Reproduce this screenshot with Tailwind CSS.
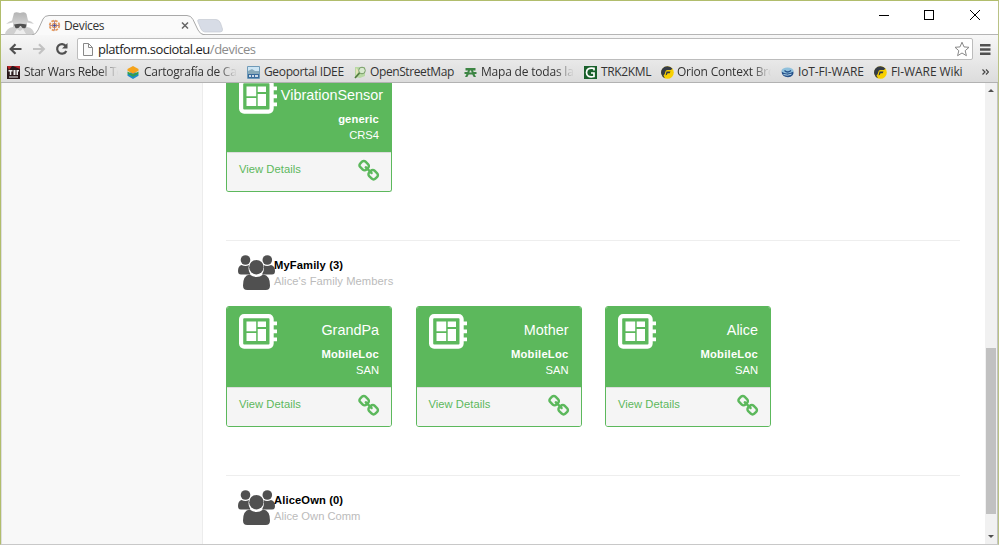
<!DOCTYPE html>
<html lang="en">
<head>
<meta charset="utf-8">
<title>Devices</title>
<script src="https://cdn.jsdelivr.net/npm/@tailwindcss/browser@4"></script>
</head>
<body class="w-[999px] h-[545px] overflow-hidden bg-white">
<svg class="hidden">
  <symbol id="link" viewBox="0 0 1792 1792"><path d="M1456 1216q0-40-28-68l-208-208q-28-28-68-28-42 0-72 32 3 3 19 18.500t21.500 21.500 15 19 13 25.500 3.500 27.500q0 40-28 68t-68 28q-15 0-27.500-3.500t-25.500-13-19-15-21.500-21.500-18.500-19q-33 31-33 73 0 40 28 68l206 207q27 27 68 27 40 0 68-26l147-146q28-28 28-67zm-703-705q0-40-28-68l-206-207q-28-28-68-28-39 0-68 27l-147 146q-28 28-28 67 0 40 28 68l208 208q27 27 68 27 42 0 72-31-3-3-19-18.500t-21.500-21.500-15-19-13-25.500-3.500-27.500q0-40 28-68t68-28q15 0 27.500 3.500t25.500 13 19 15 21.500 21.500 18.500 19q33-31 33-73zm895 705q0 120-85 203l-147 146q-83 83-203 83-121 0-204-85l-206-207q-83-83-83-203 0-123 88-209l-88-88q-86 88-208 88-120 0-204-84l-208-208q-84-84-84-204t85-203l147-146q83-83 203-83 121 0 204 85l206 207q83 83 83 203 0 123-88 209l88 88q86-88 208-88 120 0 204 84l208 208q84 84 84 204z" fill="#5cb85c"/></symbol>
  <symbol id="chip" viewBox="0 0 38 35"><rect x="2.100" y="2.100" width="30.500" height="30.500" rx="3" fill="none" stroke="#fff" stroke-width="4.200"/><path d="M7.500 7.500h9.700v9.700h-9.700zM18.700 7.500h8.300v5.500h-8.300zM7.500 19h9.700v8h-9.700zM18.700 15h8.300v12h-8.300zM33 7.500h5v3.800h-5zM33 15.500h5v3.800h-5zM33 23.500h5v3.800h-5z" fill="#fff"/></symbol>
  <symbol id="group" viewBox="0 0 37 35"><g fill="#505050"><circle cx="7.500" cy="5" r="4.800"/><circle cx="29.300" cy="5" r="4.800"/><path d="M3.500 10q4 2 7.500 0q-1.500 5 1.500 9.500H3q-3 0-3-3.500q0-5 3.500-6zM33 10q-4 2-7.500 0q1.500 5-1.500 9.500h10q3 0 3-3.500q0-5-4-6z"/><circle cx="18.400" cy="12.200" r="7.200"/><path d="M11.500 19.500q7 5 13.800 0q6.700 1 6.700 11q0 4.500-4.200 4.500H9.200Q5 35 5 30.500q0-10 6.500-11z"/></g></symbol>
  <symbol id="fiware" viewBox="0 0 13 13"><circle cx="6.500" cy="6.500" r="6.300" fill="#f8d000"/><path d="M4 12.300A6.300 6.300 0 1 1 11.500 2.800L9.800 4H6.500Q4.500 4 4.300 6T2.500 9.500zM5.500 5.500h4l-.8 1.700H6.500Q6.300 9 4.500 9.500z" fill="#343b45"/></symbol>
</svg>
<div class="w-[999px] h-[545px] flex flex-col border-t border-l border-[#b1bd6c] border-r border-r-[#b9c285] border-b border-b-[#c8c8c8] font-['Open_Sans','Noto_Sans',sans-serif] text-[#333]">

  <!-- tab strip -->
  <header class="h-[34px] shrink-0 flex relative border-b border-[#b5b5b5]">
    <svg class="w-[226px] h-[34px]" viewBox="1 1 226 34">
      <defs><linearGradient id="hat" x2="0" y2="1"><stop stop-color="#b4b4b4"/><stop offset="1" stop-color="#d2d2d2"/></linearGradient></defs>
      <path d="M5 34.500Q6 28 13 27V21H27V27Q34 28 34 34.500z" fill="#d0d0d0"/>
      <path d="M6 24Q9 21 12 20.500L14 13Q16 11.500 20 13Q25 11 26.500 14L28 20.500Q32 21 34 24Q20 20 6 24z" fill="url(#hat)"/>
      <path d="M14 24.500Q20 23 26.500 24.500L25.500 28Q22 29 21 26h-1Q19 29 15.500 28z" fill="#505050"/>
      <path d="M14 34l3-5 3 2 3-2 3 5z" fill="#eee"/>
      <path d="M32 35Q36 34.500 38 30L43 19Q44.500 15.500 49 15.500H187Q191 15.500 193 19.500L198 30Q200 34.500 205 35" fill="#fafafa" stroke="#a9a9a9"/>
      <path d="M199 19.500H216Q219 19.500 220.500 23L222.500 29Q223 32 220 32H205Q202.500 32 201 29L198 22Q197 19.500 199 19.500z" fill="#d7dce6" stroke="#c5cad3" stroke-width=".7"/>
      <g fill="none" stroke="#e59a5c" stroke-width="1.200"><circle cx="54.500" cy="25.500" r="2.200"/><circle cx="54.500" cy="25.500" r="4.800" stroke-dasharray="2.600 1.170" stroke-width="1.800"/><path d="M49.500 25.500h10M54.500 20.500v10" stroke="#986c89" stroke-width=".8"/></g><circle cx="54.500" cy="25.500" r="1.200" fill="#445399"/>
      <path d="M182 22.500l6 6M188 22.500l-6 6" stroke="#666" stroke-width="1.500"/>
    </svg>
    <span class="absolute left-[63px] top-[16px] leading-[17px] text-[12px] tracking-[-0.35px]">Devices</span>
    <svg class="ml-auto mr-[15px] mt-[8px] w-[104px] h-[12px]" viewBox="0 0 104 12" fill="none" stroke="#000" shape-rendering="crispEdges"><path d="M0 6.500h10"/><path d="M45.500 1.500h9v9h-9z"/><path d="M91 1l10 10M101 1l-10 10" shape-rendering="auto"/></svg>
  </header>

  <!-- toolbar and bookmarks -->
  <div class="h-[48px] shrink-0 flex flex-col bg-linear-to-b from-[#f7f7f7] to-[#dcdcdc] border-b border-[#b2b2b2]">
    <div class="h-[27px] flex items-center pt-px">
      <svg class="w-[76px] h-[22px] shrink-0" viewBox="1 38 76 22" fill="none" stroke="#505050" stroke-width="2.200"><path d="M21.500 49H11M15.500 44.200L10.700 49l4.800 4.800"/><path d="M33 49h10.500M39 44.200l4.800 4.800-4.800 4.800" stroke="#c2c2c2"/><path d="M65.800 46A4.800 4.800 0 1 0 66.300 51"/><path d="M67.500 43v5.500H62z" fill="#505050" stroke="none"/></svg>
      <div class="w-[896px] h-[22px] flex items-center bg-white border border-[#bcbcbc] rounded-[2px] pl-[5px] pr-[2px]">
        <svg class="w-[10px] h-[13px]" viewBox="0 0 10 13" fill="#fafafa" stroke="#888"><path d="M.5.5h5l4 4v8h-9zM5.500.5v4h4"/></svg>
        <span class="ml-[5px] text-[13px] leading-[18px] text-[#222] tracking-[-0.47px]">platform.sociotal.eu<span class="text-[#8b8b8b]">/devices</span></span>
        <svg class="ml-auto w-[16px] h-[16px]" viewBox="0 0 16 16"><path d="M8 1.200l2 4.700 5 .4-3.800 3.400 1.200 5L8 12l-4.400 2.700 1.200-5L1 6.300l5-.4z" fill="#fff" stroke="#888"/></svg>
      </div>
      <svg class="ml-[7px] w-[11px] h-[11px]" viewBox="0 0 11 11" fill="#505050"><path d="M0 0h10.500v2.500H0zM0 4.200h10.500v2.500H0zM0 8.400h10.500v2.500H0z"/></svg>
    </div>
    <nav class="h-[20px] text-[12px] leading-[18px] whitespace-nowrap flex items-center">
      <div class="w-[120px] pl-[6px] flex items-center gap-[4px]">
        <svg class="w-[13px] h-[13px] shrink-0" viewBox="0 0 13 13"><path d="M0 0h13v13H0z" fill="#29171a"/><path d="M0 0h5l-3 4zM6 0h7v3z" fill="#b6242a"/><path d="M1.500 4h4v1.500h-1.200V9H2.800V5.500H1.500zM6.500 4h2v5h-2zM9.500 4H12v1.500h-1V9H9.500zM2 10.500h9v1H2z" fill="#eee"/></svg>
        <span class="w-[94px] overflow-hidden tracking-[-0.34px] mask-r-from-80%">Star Wars Rebel Te</span></div>
      <div class="w-[120px] pl-[6px] flex items-center gap-[5px]">
        <svg class="w-[12px] h-[13px] shrink-0" viewBox="0 0 12 13"><path d="M.5 8L6 5l5.500 3v1.800L6 13 .5 9.800z" fill="#1d8cc8"/><path d="M.5 5.500L6 8.500l5.500-3v2.300L6 10.800.5 7.800z" fill="#35a04a"/><path d="M.5 3L6 0l5.500 3v1.800L6 7.800.5 4.800z" fill="#f5a31a"/></svg>
        <span class="w-[93px] overflow-hidden tracking-[-0.26px] mask-r-from-80%">Cartografía de Cata</span></div>
      <div class="w-[107px] pl-[6px] flex items-center gap-[4px]">
        <svg class="w-[13px] h-[13px] shrink-0" viewBox="0 0 13 13"><path d="M.5.5h12v12H.5z" fill="#cde5f4" stroke="#6f9ab8"/><path d="M1 5l4-2 3 2h4v3H1z" fill="#87a9b9"/><path d="M1 8h11v4H1z" fill="#396c9c"/><path d="M2 10h2m1 0h2m1 0h3" stroke="#fff" stroke-width="1.500"/></svg>
        <span class="tracking-[-0.35px]">Geoportal IDEE</span></div>
      <div class="w-[110px] pl-[6px] flex items-center gap-[3px]">
        <svg class="w-[13px] h-[13px] shrink-0" viewBox="0 0 13 13"><path d="M1 1h10v9l-5 2-5-1z" fill="#b8d9a4"/><path d="M2 2l3 3-3 4z" fill="#e5e4b8"/><circle cx="8" cy="4.500" r="3.300" fill="#d8e9cf" stroke="#779b68"/><path d="M5.500 7L1 12" stroke="#527a3d" stroke-width="1.700"/></svg>
        <span class="tracking-[-0.4px]">OpenStreetMap</span></div>
      <div class="w-[120px] pl-[6px] flex items-center gap-[4px]">
        <svg class="w-[13px] h-[11px] shrink-0" viewBox="0 0 13 11"><path d="M1.500 1h10v2.500H9L9.700 5h2.800v2h-2l1.500 3H9.700L8.300 7.500H4.700L3.300 10H1l1.500-3H.5V5h2.800L4 3.500H1.500zM6 3.500L5.300 5.500h2.400L7 3.500z" fill="#3d8544"/></svg>
        <span class="w-[93px] overflow-hidden tracking-[-0.2px] mask-r-from-80%">Mapa de todas las</span></div>
      <div class="w-[77px] pl-[6px] flex items-center gap-[4px]">
        <svg class="w-[13px] h-[13px] shrink-0" viewBox="0 0 13 13"><path d="M0 0h13v13H0z" fill="#19602b"/><path d="M10 4.500V2.300Q2.500 1 2.500 6.500T10 10.500V7H7" fill="none" stroke="#fff" stroke-width="1.700"/></svg>
        <span class="tracking-[-0.35px]">TRK2KML</span></div>
      <div class="w-[120px] pl-[6px] flex items-center gap-[3px]">
        <svg class="w-[13px] h-[13px] shrink-0"><use href="#fiware"/></svg>
        <span class="w-[94px] overflow-hidden tracking-[-0.22px] mask-r-from-80%">Orion Context Broker</span></div>
      <div class="w-[93px] pl-[6px] flex items-center gap-[4px]">
        <svg class="w-[13px] h-[11px] shrink-0" viewBox="0 0 13 11"><ellipse cx="6.500" cy="3.800" rx="6" ry="3.200" fill="#8fc0dc"/><path d="M.5 4.500q5 4 12 0Q13 9.500 7 10.300 1 10 .5 4.500z" fill="#24508a"/><path d="M3.500 3.500q3 3 6.500 0" stroke="#24508a" stroke-width="1.300" fill="none"/><path d="M2.500 7.500q4 1.500 8-.3" stroke="#b4d5e8" fill="none"/></svg>
        <span class="tracking-[-0.13px]">IoT-FI-WARE</span></div>
      <div class="w-[100px] pl-[6px] flex items-center gap-[4px]">
        <svg class="w-[13px] h-[13px] shrink-0"><use href="#fiware"/></svg>
        <span class="tracking-[-0.1px]">FI-WARE Wiki</span></div>
      <svg class="ml-[14px] w-[7px] h-[6px]" viewBox="0 0 7 6" fill="none" stroke="#444" stroke-width="1.200"><path d="M.5.5L3 3 .5 5.500M4 .5L6.500 3 4 5.500"/></svg>
    </nav>
  </div>

  <!-- page -->
  <div class="flex-1 min-h-0 flex bg-white font-['Liberation_Sans',Arial,sans-serif] text-[11.2px] leading-[16px]">
    <aside class="w-[202px] shrink-0 bg-[#f8f8f8] border-r border-[#ececec] border-l border-l-[#dedede]"></aside>
    <main class="w-[757px] pl-[23px] flex flex-col overflow-hidden">
      <article class="w-[166px] h-[109px] shrink-0 border border-t-0 border-[#5cb85c] rounded-b-[3px] flex flex-col overflow-hidden">
        <div class="h-[69px] shrink-0 bg-[#5cb85c] relative text-white text-right px-[12px] flex flex-col">
          <svg class="w-[38px] h-[35px] absolute left-[12px] top-[-4px]"><use href="#chip"/></svg>
          <div class="mt-[4px] -mr-[4px] text-[14.4px] h-[24px]">VibrationSensor</div>
          <div class="font-bold tracking-[0.15px]">generic</div>
          <div>CRS4</div>
        </div>
        <div class="flex-1 bg-[#f5f5f5] border-t border-[#ddd] flex justify-between pl-[12px] pr-[10px] text-[#5cb85c]"><span class="mt-[8px] tracking-[0.04px]">View Details</span><svg class="mt-[6px] w-[23px] h-[24px]"><use href="#link"/></svg></div>
      </article>
      <hr class="mt-[48px] border-[#eee] shrink-0">
      <section class="flex h-[65px] shrink-0 pt-[14px] pl-[12px]">
        <svg class="w-[37px] h-[35px] shrink-0 -mr-px"><use href="#group"/></svg>
        <div class="pt-[2px]"><div class="font-bold text-black tracking-[0.12px]">MyFamily (3)</div><div class="text-[#bbb] tracking-[0.07px]">Alice's Family Members</div></div>
      </section>
      <div class="flex gap-[23.500px] h-[121px] shrink-0">
        <article class="w-[166px] shrink-0 border border-[#5cb85c] rounded-[3px] flex flex-col overflow-hidden">
          <div class="h-[80px] shrink-0 bg-[#5cb85c] relative text-white text-right px-[12px]">
            <svg class="w-[38px] h-[35px] absolute left-[12px] top-[7px]"><use href="#chip"/></svg>
            <div class="pt-[15px] text-[14.4px] h-[39px]">GrandPa</div><div class="font-bold tracking-[0.25px]">MobileLoc</div><div>SAN</div>
          </div>
          <div class="flex-1 bg-[#f5f5f5] border-t border-[#ddd] flex justify-between pl-[12px] pr-[10px] text-[#5cb85c]"><span class="mt-[8px] tracking-[0.04px]">View Details</span><svg class="mt-[6px] w-[23px] h-[24px]"><use href="#link"/></svg></div>
        </article>
        <article class="w-[166px] shrink-0 border border-[#5cb85c] rounded-[3px] flex flex-col overflow-hidden">
          <div class="h-[80px] shrink-0 bg-[#5cb85c] relative text-white text-right px-[12px]">
            <svg class="w-[38px] h-[35px] absolute left-[12px] top-[7px]"><use href="#chip"/></svg>
            <div class="pt-[15px] text-[14.4px] h-[39px]">Mother</div><div class="font-bold tracking-[0.25px]">MobileLoc</div><div>SAN</div>
          </div>
          <div class="flex-1 bg-[#f5f5f5] border-t border-[#ddd] flex justify-between pl-[12px] pr-[10px] text-[#5cb85c]"><span class="mt-[8px] tracking-[0.04px]">View Details</span><svg class="mt-[6px] w-[23px] h-[24px]"><use href="#link"/></svg></div>
        </article>
        <article class="w-[166px] shrink-0 border border-[#5cb85c] rounded-[3px] flex flex-col overflow-hidden">
          <div class="h-[80px] shrink-0 bg-[#5cb85c] relative text-white text-right px-[12px]">
            <svg class="w-[38px] h-[35px] absolute left-[12px] top-[7px]"><use href="#chip"/></svg>
            <div class="pt-[15px] text-[14.4px] h-[39px]">Alice</div><div class="font-bold tracking-[0.25px]">MobileLoc</div><div>SAN</div>
          </div>
          <div class="flex-1 bg-[#f5f5f5] border-t border-[#ddd] flex justify-between pl-[12px] pr-[10px] text-[#5cb85c]"><span class="mt-[8px] tracking-[0.04px]">View Details</span><svg class="mt-[6px] w-[23px] h-[24px]"><use href="#link"/></svg></div>
        </article>
      </div>
      <hr class="mt-[48px] border-[#eee] shrink-0">
      <section class="flex h-[66px] shrink-0 pt-[14px] pl-[12px]">
        <svg class="w-[37px] h-[35px] shrink-0 -mr-px"><use href="#group"/></svg>
        <div class="pt-[2px]"><div class="font-bold text-black tracking-[0.12px]">AliceOwn (0)</div><div class="text-[#bbb]">Alice Own Comm</div></div>
      </section>
    </main>
    <div class="ml-auto w-[13px] shrink-0 bg-[#f1f1f1] border-r border-[#c4c4c4] flex flex-col items-center">
      <svg class="mt-[6px] w-[6px] h-[3px]" viewBox="0 0 6 3"><path d="M0 3l3-3 3 3z" fill="#505050"/></svg>
      <div class="mt-[256px] w-[10px] h-[166px] bg-[#c1c1c1]"></div>
      <svg class="mt-[21px] w-[6px] h-[3px]" viewBox="0 0 6 3"><path d="M0 0h6L3 3z" fill="#505050"/></svg>
    </div>
  </div>
</div>
</body>
</html>
